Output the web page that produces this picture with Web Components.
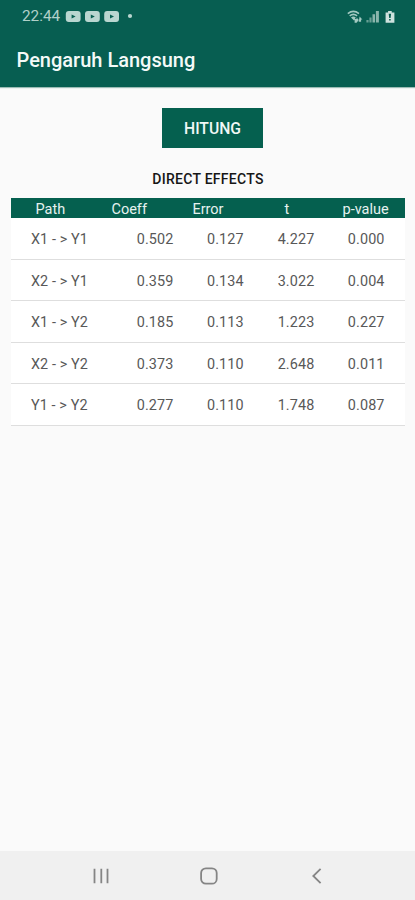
<!DOCTYPE html>
<html lang="id">
<head>
<meta charset="utf-8">
<title>Pengaruh Langsung</title>
<style>
  body {
    margin: 0;
    font-family: Roboto, "Liberation Sans", sans-serif;
  }
</style>
</head>
<body>
<app-screen>
  <status-bar slot="top">22:44</status-bar>
  <app-bar slot="top">Pengaruh Langsung</app-bar>
  <action-button>HITUNG</action-button>
  <effects-table>DIRECT EFFECTS</effects-table>
  <nav-bar slot="bottom"></nav-bar>
</app-screen>

<template id="app-screen">
  <style>
    :host {
      display: flex;
      flex-direction: column;
      height: 900px;
      overflow: hidden;
      background: #fafafa;
    }
    header {
      box-sizing: border-box;
      height: 87px;
      background: #075e51;
      box-shadow: 0 1px 1px #9bbcb5;
    }
    main {
      flex: 1;
      display: flex;
      flex-direction: column;
      align-items: center;
      padding: 21px 10px 0 11px;
    }
  </style>
  <header><slot name="top"></slot></header>
  <main><slot></slot></main>
  <slot name="bottom"></slot>
</template>

<template id="status-bar">
  <style>
    :host {
      display: flex;
      align-items: center;
      box-sizing: border-box;
      height: 33px;
      padding: 0 19px 0 22px;
      color: #b0d0c9;
      font-size: 15.3px;
      line-height: 33px;
    }
    svg { display: block; }
    .notes { margin-left: 5px; }
    .system { margin-left: auto; }
  </style>
  <span><slot></slot></span>
  <svg class="notes" width="70" height="14" viewBox="0 0 70 14" fill="#b9d6d0">
    <rect x="0.8" y="0.9" width="14.8" height="11" rx="3"/>
    <rect x="20" y="0.9" width="14.8" height="11" rx="3"/>
    <rect x="39.2" y="0.9" width="14.8" height="11" rx="3"/>
    <path fill="#075e51" d="M6.6 4.4l4 2-4 2zM25.8 4.4l4 2-4 2zM45 4.4l4 2-4 2z"/>
    <circle cx="65" cy="6" r="2.1"/>
  </svg>
  <svg class="system" width="49" height="14" viewBox="0 0 49 14">
    <!-- wifi with traffic arrows -->
    <g fill="none" stroke="#a3c9c1" stroke-width="1.6">
      <path d="M0.8 3.6Q6.4 -0.8 12 3.6"/>
      <path d="M2.7 5.9Q6.4 2.8 10.1 5.9"/>
    </g>
    <path fill="#a3c9c1" d="M4 7.4Q6.4 5.4 8.8 7.4L7 10.4zM7.6 9h2V7.6L11.8 10 9.6 12.8H7.6zM12.6 6.6l2.8 2.8h-1.3v2.4h-2.4z"/>
    <!-- signal -->
    <path fill="#699f95" d="M19.4 10h2.2v2.6h-2.2zM22.4 7.5h2.2v5.1h-2.2z"/>
    <path fill="#8ab5ac" d="M25.5 4.2H28v8.4h-2.5zM28.9 0.9h3v11.7h-3z"/>
    <!-- battery -->
    <path fill="#cee2de" d="M41.1 0.9h3.6v1.5h2.7v10.4h-8.8V2.4h2.5z"/>
    <path fill="#075e51" d="M41.7 3.8h2.4l-.5 4.2h-1.4zM42.1 9h1.6v1.6h-1.6z"/>
  </svg>
</template>

<template id="app-bar">
  <style>
    :host {
      display: flex;
      align-items: center;
      height: 54px;
      padding-left: 16.5px;
      color: #f4faf8;
      font-size: 20px;
      font-weight: 500;
    }
  </style>
  <span><slot></slot></span>
</template>

<template id="action-button">
  <style>
    :host {
      display: block;
      margin-left: 9px;
    }
    button {
      display: block;
      width: 101px;
      height: 40px;
      padding: 1px 0 0;
      border: 0;
      background: #05604f;
      color: #f1f8f6;
      font: 500 15.7px Roboto, "Liberation Sans", sans-serif;
    }
  </style>
  <button type="button"><slot></slot></button>
</template>

<template id="effects-table">
  <style>
    :host {
      display: block;
      align-self: stretch;
    }
    h2 {
      margin: 22px 0 10px;
      color: #161616;
      font-size: 14px;
      font-weight: 500;
      line-height: 18px;
      letter-spacing: 0.27px;
      text-align: center;
    }
    .head {
      display: grid;
      grid-template-columns: repeat(5, 1fr);
      height: 20px;
      background: #05604f;
      color: #e6f2ef;
      font-size: 14.5px;
      line-height: 23px;
      text-align: center;
    }
    .row {
      display: grid;
      grid-template-columns: 105.7px 70.3px 70.7px 70.2px auto;
      box-sizing: border-box;
      height: 41.5px;
      padding-left: 20px;
      border-bottom: 1px solid #dedede;
      background: #fff;
      color: #585858;
      font-size: 14.4px;
      line-height: 43.4px;
      letter-spacing: 0.1px;
    }
  </style>
  <h2><slot></slot></h2>
  <div class="head"></div>
  <div class="body"></div>
</template>

<template id="nav-bar">
  <style>
    :host {
      display: flex;
      justify-content: space-between;
      align-items: center;
      box-sizing: border-box;
      height: 49px;
      padding: 0 89px 0 92px;
      background: #f0f0f0;
    }
    svg {
      fill: none;
      stroke: #858585;
      stroke-width: 1.8;
    }
  </style>
  <svg width="18" height="18" viewBox="0 0 18 18"><path d="M2.5 1.8v14.4M9.3 1.8v14.4M15.5 1.8v14.4"/></svg>
  <svg width="18" height="18" viewBox="0 0 18 18"><rect x="1.1" y="1.3" width="15.6" height="15.4" rx="4.8"/></svg>
  <svg width="18" height="18" viewBox="0 0 18 18"><path d="M12.6 1.8L5.3 9l7.3 7.2"/></svg>
</template>

<script>
const columns = ["Path", "Coeff", "Error", "t", "p-value"];
const effects = [
  ["X1 - > Y1", "0.502", "0.127", "4.227", "0.000"],
  ["X2 - > Y1", "0.359", "0.134", "3.022", "0.004"],
  ["X1 - > Y2", "0.185", "0.113", "1.223", "0.227"],
  ["X2 - > Y2", "0.373", "0.110", "2.648", "0.011"],
  ["Y1 - > Y2", "0.277", "0.110", "1.748", "0.087"],
];

class TemplateElement extends HTMLElement {
  constructor() {
    super();
    const template = document.getElementById(this.localName);
    this.attachShadow({ mode: "open" });
    this.shadowRoot.appendChild(template.content.cloneNode(true));
  }
}

class EffectsTable extends TemplateElement {
  connectedCallback() {
    this.fill(this.shadowRoot.querySelector(".head"), columns);
    const body = this.shadowRoot.querySelector(".body");
    body.replaceChildren();
    effects.forEach((effect) => {
      const row = document.createElement("div");
      row.className = "row";
      this.fill(row, effect);
      body.appendChild(row);
    });
  }
  fill(parent, values) {
    parent.replaceChildren();
    values.forEach((value) => {
      const cell = document.createElement("span");
      cell.textContent = value;
      parent.appendChild(cell);
    });
  }
}

customElements.define("app-screen", class extends TemplateElement {});
customElements.define("status-bar", class extends TemplateElement {});
customElements.define("app-bar", class extends TemplateElement {});
customElements.define("action-button", class extends TemplateElement {});
customElements.define("effects-table", EffectsTable);
customElements.define("nav-bar", class extends TemplateElement {});
</script>
</body>
</html>
